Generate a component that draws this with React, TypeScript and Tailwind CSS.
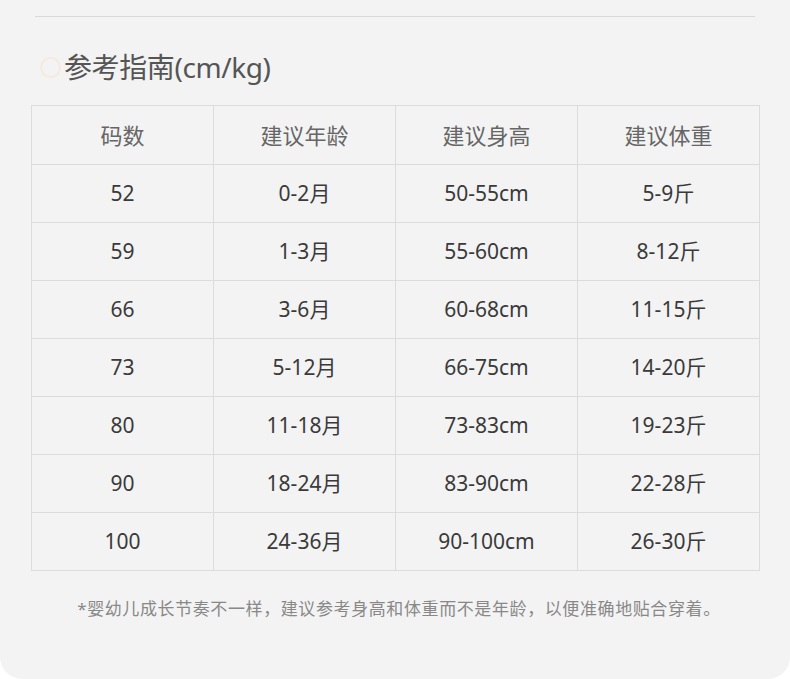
const rows = [
  ['52', '0-2月', '50-55cm', '5-9斤'],
  ['59', '1-3月', '55-60cm', '8-12斤'],
  ['66', '3-6月', '60-68cm', '11-15斤'],
  ['73', '5-12月', '66-75cm', '14-20斤'],
  ['80', '11-18月', '73-83cm', '19-23斤'],
  ['90', '18-24月', '83-90cm', '22-28斤'],
  ['100', '24-36月', '90-100cm', '26-30斤'],
];

const headers = ['码数', '建议年龄', '建议身高', '建议体重'];

export default function App() {
  return (
    <div className="w-[790px] h-[679px] bg-white" style={{ fontFamily: '"Noto Sans", "Noto Sans CJK SC", sans-serif' }}>
      <div className="h-full bg-[#f3f3f3] rounded-b-[22px] pt-4">
        <div className="mx-[35px] h-px bg-[#d9d9d9]" />

        <div className="flex items-center ml-[40px] mt-[32px] h-[36px]">
          <span className="w-[21px] h-[21px] rounded-full border-2 border-[#f8e8df] mr-[3px]" />
          <h1 className="text-[28px] leading-none text-[#555] tracking-[-0.4px]">参考指南(cm/kg)</h1>
        </div>

        <table className="ml-[31px] mt-[20px] w-[729px] border-collapse table-fixed">
          <thead>
            <tr className="h-[59px]">
              {headers.map((h) => (
                <th key={h} className="border border-[#dcdcdc] font-normal text-[22px] text-[#666]">{h}</th>
              ))}
            </tr>
          </thead>
          <tbody>
            {rows.map((r) => (
              <tr key={r[0]} className="h-[58px]">
                {r.map((c, i) => (
                  <td key={i} className="border border-[#dcdcdc] text-center text-[21px] text-[#3a3a3a]">{c}</td>
                ))}
              </tr>
            ))}
          </tbody>
        </table>

        <p className="mt-[25px] pl-[8px] text-center text-[17px] text-[#888] tracking-[0.6px]">
          *婴幼儿成长节奏不一样，建议参考身高和体重而不是年龄，以便准确地贴合穿着。
        </p>
      </div>
    </div>
  );
}
